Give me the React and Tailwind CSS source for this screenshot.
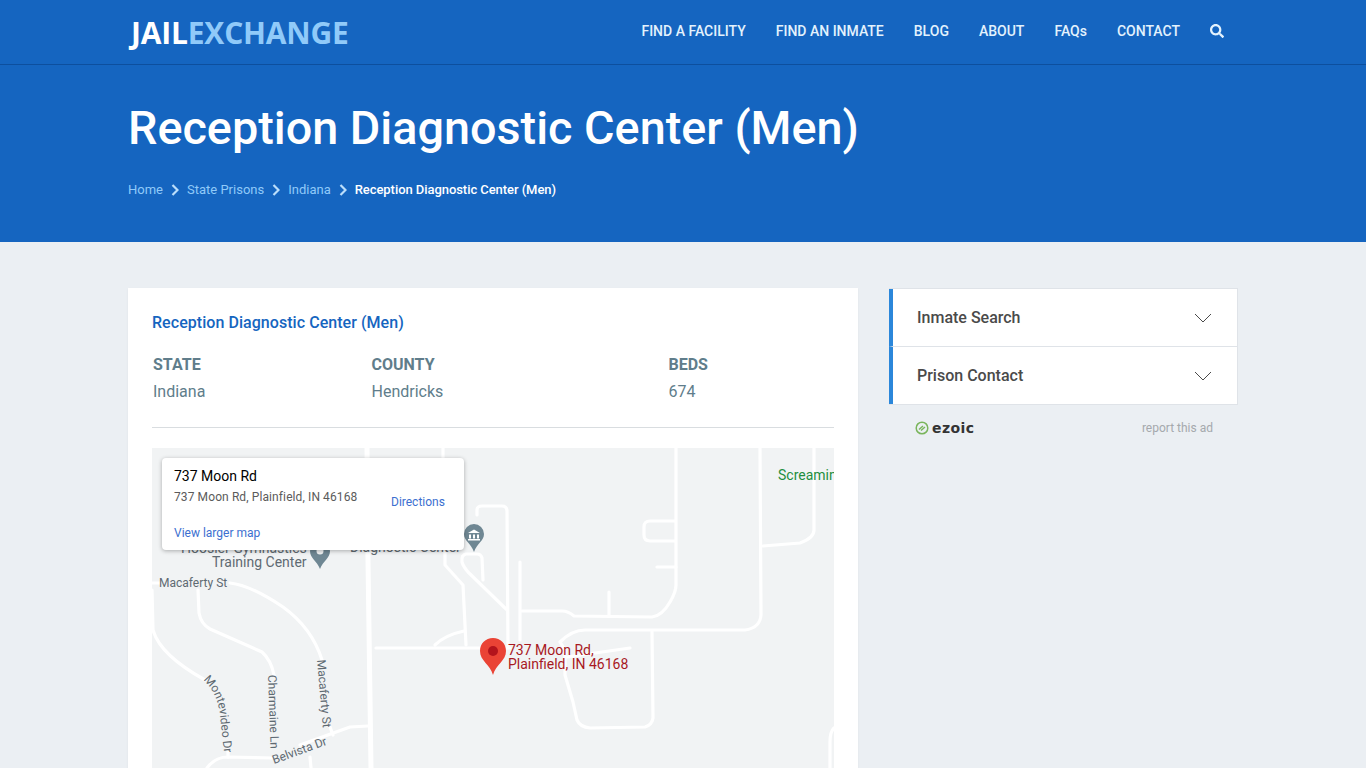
import React from 'react';
import { FaSearch } from 'react-icons/fa';

const roboto = "font-['Roboto',sans-serif]";

const navLinks = ['FIND A FACILITY', 'FIND AN INMATE', 'BLOG', 'ABOUT', 'FAQs', 'CONTACT'];

// white road lines of the map, in page coordinates
const roads = [
  'M376 648 L510 648',
  'M477 515 L477 510 Q477 506 482 506 L502 506 Q507 506 507 511 L508 648',
  'M520 562 L520 640',
  'M522 611 L562 611 Q568 611 574 616 L652 617 Q662 616 670 602 Q676 592 676 585 L676 448',
  'M609 592 L609 616',
  'M657 567 L676 567',
  'M675 521 L650 521 Q644 521 644 527 L644 535 Q644 541 650 541 L675 541',
  'M760 448 L761 615 Q760 628 745 630 L585 630 Q572 630 560 642 L565 650 L565 675 L573 702 L577 720 Q580 727 590 728 L645 727 Q652 725 653 718 L652 632',
  'M567 657 L630 648',
  'M814 448 L814 530 Q814 538 800 543 L763 546',
  'M830 768 L830 742 Q830 732 834 728',
  'M152 583 L160 583',
  'M230 583 Q250 585 283 607 Q312 628 322 660',
  'M330 727 L333 735',
  'M198 590 L199 613 Q201 624 210 629 L262 652 Q271 660 274 675',
  'M152 590 L153 630 Q160 655 205 680',
  'M228 747 L228 757',
  'M207 768 Q215 757 228 757 L272 758',
  'M300 745 L350 727 L368 726',
  'M310 757 L311 768',
  'M445 548 L445 565 L463 585 L466 645',
  'M435 645 Q445 635 464 631',
  'M483 580 L482 558 Q481 554 477 554 L466 554 Q461 555 462 562 Q463 566 468 572 L506 609',
  'M443 448 L443 458',
];

const MapCanvas = () => (
  <div className="relative h-[460px] w-full overflow-hidden bg-[#f1f3f4]">
    <svg className="h-[460px] w-[682px]" viewBox="152 448 682 460" fill="none">
      <defs>
        <path id="montevideo" d="M203 680 Q218 693 220 716 L224 752" />
      </defs>
      <g stroke="#ffffff" strokeWidth="3.200" strokeLinejoin="round" strokeLinecap="round">
        {roads.map((d) => (
          <path key={d} d={d} />
        ))}
        <path d="M367 448 L368 560 L371 768" strokeWidth="5" />
      </g>

      <g fontFamily="Roboto, sans-serif" fontSize="12" fill="#5f6a72">
        <text x="159" y="587">Macaferty St</text>
        <text>
          <textPath href="#montevideo">Montevideo Dr</textPath>
        </text>
        <text x="0" y="0" transform="translate(268 675) rotate(88)">Charmaine Ln</text>
        <text x="0" y="0" transform="translate(317 660) rotate(85)">Macaferty St</text>
        <text x="0" y="0" transform="translate(274 764) rotate(-20)">Belvista Dr</text>
      </g>
      <g fontFamily="Roboto, sans-serif" fontSize="14" fill="#5f6a72">
        <text x="181" y="553">Hoosier Gymnastics</text>
        <text x="212" y="567">Training Center</text>
        <text x="350" y="552">Diagnostic Center</text>
      </g>
      <text x="778" y="480" fontFamily="Roboto, sans-serif" fontSize="14" fill="#1e8e3e">Screaming</text>
      <g fontFamily="Roboto, sans-serif" fontSize="14" fill="#a8191f">
        <text x="508" y="655">737 Moon Rd,</text>
        <text x="508" y="669">Plainfield, IN 46168</text>
      </g>

      {/* grey place pins */}
      <path d="M320 541 a10 10 0 0 1 10 10 c0 7 -7 10 -10 18 c-3 -8 -10 -11 -10 -18 a10 10 0 0 1 10 -10 z" fill="#6f8793" />
      <circle cx="320" cy="551" r="3.500" fill="#f1f3f4" />
      <path d="M474 524 a10 10 0 0 1 10 10 c0 7 -7 9 -10 18 c-3 -9 -10 -11 -10 -18 a10 10 0 0 1 10 -10 z" fill="#6f8793" />
      <path d="M468 533 l6 -3.500 l6 3.500 z M469 534.500 h2 v4 h-2 z M473 534.500 h2 v4 h-2 z M477 534.500 h2 v4 h-2 z M468 539 h12 v1.500 h-12 z" fill="#ffffff" />

      {/* red marker */}
      <path d="M493 638 c7.500 0 13 5.500 13 13 c0 10 -10 13 -13 24 c-3 -11 -13 -14 -13 -24 c0 -7.500 5.500 -13 13 -13 z" fill="#ea4335" />
      <circle cx="493" cy="651" r="5" fill="#b3141c" />
    </svg>

    {/* info window */}
    <div className="absolute left-[10px] top-[10px] h-[92px] w-[302px] rounded-sm bg-white shadow-[0_1px_4px_rgba(0,0,0,0.3)] font-['Roboto',sans-serif]">
      <div className="pl-3 pt-[10px] text-sm leading-4 text-black">737 Moon Rd</div>
      <div className="flex">
        <div className="w-[229px] pl-3 pt-[5px] text-xs leading-4 tracking-[0.1px] text-[#5b5b5b]">737 Moon Rd, Plainfield, IN 46168</div>
        <div className="pt-[10px] text-xs leading-4 text-[#3c6fd0]">Directions</div>
      </div>
      <div className="pl-3 pt-[15px] text-xs leading-4 text-[#3c6fd0]">View larger map</div>
    </div>
  </div>
);

const Chevron = () => (
  <svg className="h-[12px] w-[8px] text-[#bbdefb]" viewBox="0 0 8 12" fill="none" stroke="currentColor" strokeWidth="2.200">
    <path d="M1.500 1 L6.500 6 L1.500 11" />
  </svg>
);

const SideRow = ({ label, last }) => (
  <div className={`flex items-center justify-between border-l-4 border-l-[#2b87da] pl-[24px] pr-[25px] ${last ? 'h-[57px]' : 'h-[58px] border-b border-b-[#dfe3e8]'}`}>
    <span className="text-base font-medium text-[#4a4a4a]">{label}</span>
    <svg className="h-[10px] w-[18px]" viewBox="0 0 18 10" fill="none" stroke="#4a4a4a" strokeWidth="1">
      <path d="M1 1 L9 9 L17 1" />
    </svg>
  </div>
);

export default function App() {
  return (
    <div className={`h-screen overflow-hidden bg-[#ebeff3] ${roboto}`}>
      {/* top nav */}
      <header className="h-[65px] border-b border-b-[#0d4f9e] bg-[#1565c0] shadow-[0_1px_2px_rgba(0,0,0,0.2)]">
        <div className="mx-auto flex h-16 w-[1110px] items-center justify-between">
          <div className="pl-[3px] pt-[2px] font-['Open_Sans',sans-serif] text-[30px] font-bold leading-none tracking-[-0.2px]">
            <span className="text-white">JAIL</span>
            <span className="text-[#90caf9]">EXCHANGE</span>
          </div>
          <nav className="mr-[14px] flex items-center gap-[30px] pb-[2px] text-sm font-medium text-[#e3f2fd]">
            {navLinks.map((link) => (
              <span key={link}>{link}</span>
            ))}
            <FaSearch className="h-[14px] w-[14px] text-[#e3f2fd]" />
          </nav>
        </div>
      </header>

      {/* hero */}
      <section className="h-[177px] bg-[#1565c0]">
        <div className="mx-auto w-[1110px]">
          <h1 className="pt-[35px] text-[46.750px] font-medium leading-[56px] text-white">Reception Diagnostic Center (Men)</h1>
          <div className="mt-[24px] flex items-center gap-2 text-[13px] leading-5 text-[#90caf9]">
            <span>Home</span>
            <Chevron />
            <span>State Prisons</span>
            <Chevron />
            <span>Indiana</span>
            <Chevron />
            <span className="font-medium tracking-[-0.06px] text-white">Reception Diagnostic Center (Men)</span>
          </div>
        </div>
      </section>

      <main className="mx-auto flex w-[1110px] items-start justify-between pt-[46px]">
        {/* facility card */}
        <div className="w-[730px] bg-white px-6 pt-[25px] shadow-[0_1px_2px_rgba(0,0,0,0.06)]">
          <h2 className="text-base font-medium leading-5 tracking-[0.05px] text-[#1565c0]">Reception Diagnostic Center (Men)</h2>
          <div className="mt-[18px] flex border-b border-b-[#d9dde0] pb-[22px] pl-px text-base leading-[27px] text-[#607d8b]">
            <div className="w-[218.500px]">
              <div className="font-bold">STATE</div>
              <div>Indiana</div>
            </div>
            <div className="w-[297px]">
              <div className="font-bold">COUNTY</div>
              <div>Hendricks</div>
            </div>
            <div>
              <div className="font-bold">BEDS</div>
              <div>674</div>
            </div>
          </div>
          <div className="mt-5">
            <MapCanvas />
          </div>
        </div>

        {/* sidebar */}
        <aside className="w-[349px]">
          <div className="border border-[#dfe3e8] border-l-0 bg-white">
            <SideRow label="Inmate Search" />
            <SideRow label="Prison Contact" last />
          </div>
          <div className="flex items-center justify-between pl-[26px] pr-[25px] pt-[15px]">
            <div className="flex items-center gap-[3px]">
              <svg className="h-[14px] w-[14px]" viewBox="0 0 14 14" fill="none" stroke="#7ab55c" strokeWidth="1.500">
                <circle cx="7" cy="7" r="5.800" />
                <path d="M4 8.500 L8 5 M6 9.500 L10 6" />
              </svg>
              <span className="font-['DejaVu_Sans',sans-serif] text-sm font-bold leading-4 tracking-[0.4px] text-[#333333]">ezoic</span>
            </div>
            <span className="text-xs text-[#a5a9ad]">report this ad</span>
          </div>
        </aside>
      </main>
    </div>
  );
}
